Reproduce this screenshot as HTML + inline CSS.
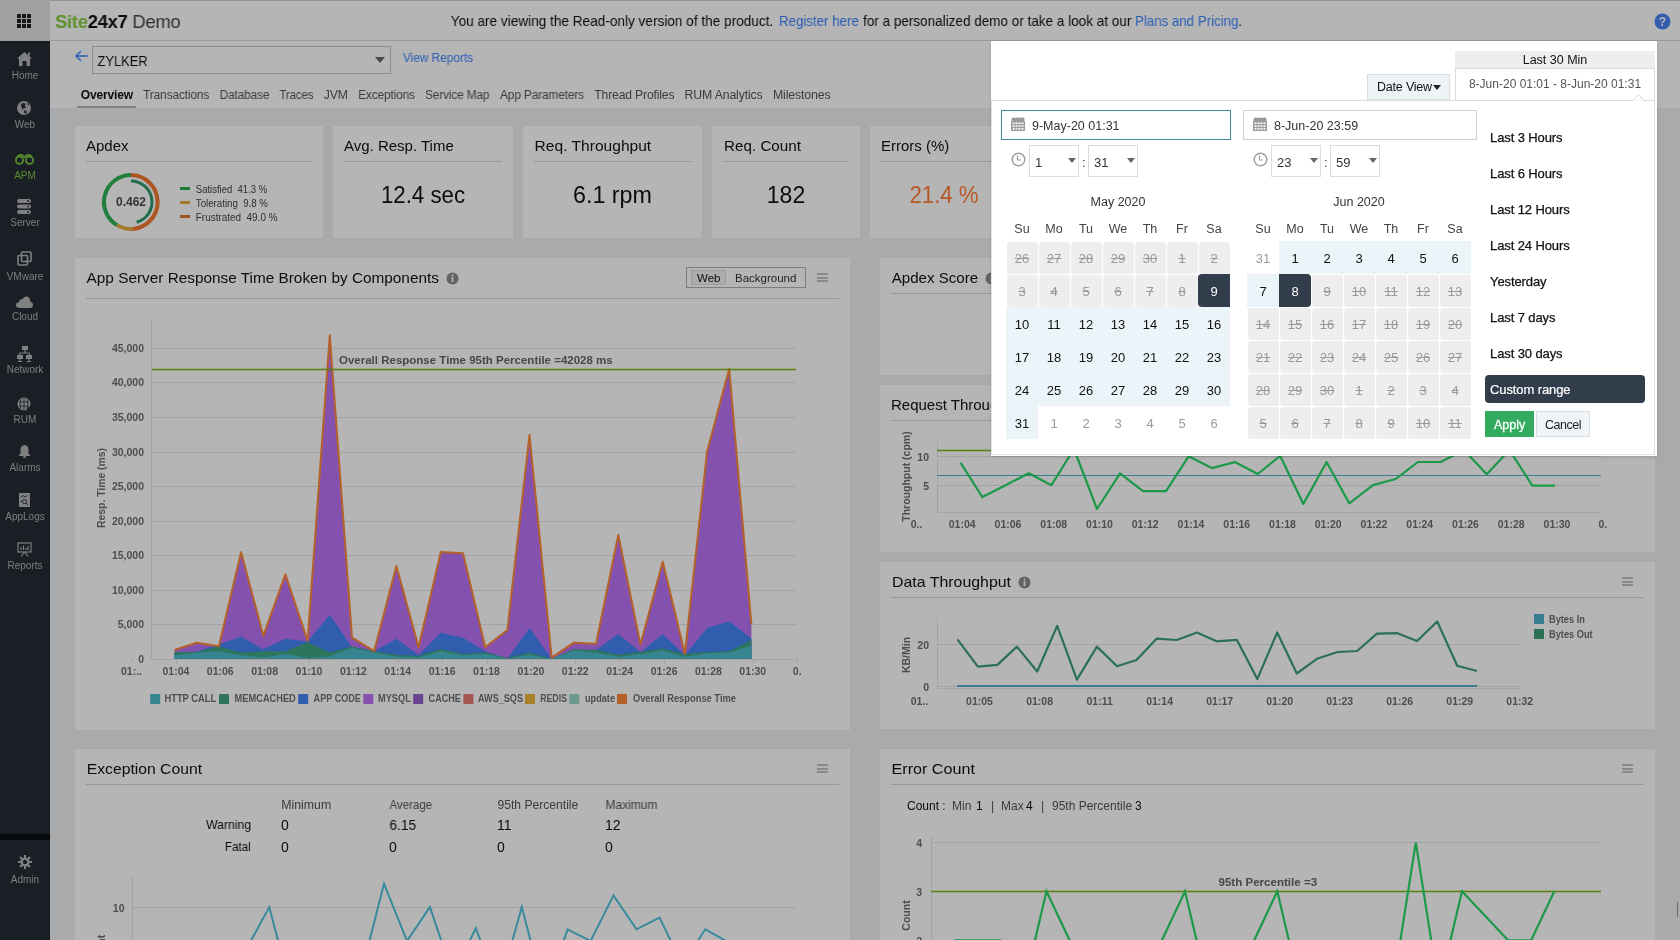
<!DOCTYPE html>
<html><head><meta charset="utf-8">
<style>
*{box-sizing:border-box;margin:0;padding:0}
html,body{width:1680px;height:940px;overflow:hidden;background:#eef0f2;font-family:"Liberation Sans",sans-serif;color:#000}
.a{position:absolute}
.nw{white-space:nowrap}
#hdr{left:0;top:0;width:1680px;height:41px;background:#fff;border-bottom:1px solid #d9d9d9}
#grid{left:0;top:0;width:50px;height:40px;background:#e2e2e2}
#side{left:0;top:41px;width:50px;height:899px;background:#252c36}
.sl{position:absolute;left:0;width:50px;text-align:center;font-size:10px;color:#b0b0b0;line-height:12px}
.si{position:absolute}
#sub{left:50px;top:41px;width:1630px;height:67px;background:#fff}
.tab{position:absolute;top:88px;font-size:12px;color:#555;white-space:nowrap;line-height:15px;letter-spacing:-0.15px}
.card{position:absolute;background:#fff}
.ct{position:absolute;left:11px;font-size:15px;color:#111;white-space:nowrap;line-height:18px;margin-top:1px}
.cdiv{position:absolute;left:11px;right:11px;height:1px;background:#d5d5d5}
.kv{position:absolute;left:0;right:0;text-align:center;font-size:23px;color:#111;line-height:28px}
.ax{font-family:"Liberation Sans",sans-serif;font-size:10.5px;font-weight:bold;fill:#6e6e6e}
.menu{position:absolute;width:11px;height:9px;border-top:2px solid #c2c2c2;border-bottom:2px solid #c2c2c2}
.menu:after{content:"";position:absolute;left:0;top:1.5px;width:11px;height:2px;background:#c2c2c2}
body>*{will-change:transform}
#ov{left:0;top:0;width:1680px;height:940px;background:rgba(0,0,0,0.29)}

</style></head><body>
<div id="hdr" class="a"></div>
<div class="a" style="left:0;top:0;width:1680px;height:1px;background:#d0d0d0"></div>
<div id="grid" class="a">
 <svg class="a" style="left:17px;top:14px" width="14" height="14" viewBox="0 0 14 14" fill="#222">
  <rect x="0" y="0" width="4" height="4"/><rect x="5" y="0" width="4" height="4"/><rect x="10" y="0" width="4" height="4"/>
  <rect x="0" y="5" width="4" height="4"/><rect x="5" y="5" width="4" height="4"/><rect x="10" y="5" width="4" height="4"/>
  <rect x="0" y="10" width="4" height="4"/><rect x="5" y="10" width="4" height="4"/><rect x="10" y="10" width="4" height="4"/>
 </svg>
</div>
<div class="a nw" style="left:55px;top:11px;font-size:19px;line-height:22px;letter-spacing:-0.3px;transform:scaleX(0.97);transform-origin:0 0"><span style="color:#86cc3c;font-weight:bold">Site</span><span style="color:#111;font-weight:bold">24x7</span> <span style="color:#444">Demo</span></div>
<div class="a nw" id="f_b1" style="left:451px;top:12px;font-size:15px;line-height:18px;color:#111;transform:translateX(-0.30px) scaleX(0.9072);transform-origin:0 0">You are viewing the Read-only version of the product.</div>
<div class="a nw" id="f_b2" style="left:779px;top:12px;font-size:15px;line-height:18px;color:#3f85ff;transform:translateX(-0.10px) scaleX(0.8884);transform-origin:0 0">Register here</div>
<div class="a nw" id="f_b3" style="left:862.5px;top:12px;font-size:15px;line-height:18px;color:#111;transform:translateX(0.00px) scaleX(0.9013);transform-origin:0 0">for a personalized demo or take a look at our</div>
<div class="a nw" id="f_b4" style="left:1135px;top:12px;font-size:15px;line-height:18px;color:#111;transform:translateX(0.00px) scaleX(0.8850);transform-origin:0 0"><span style="color:#3f85ff">Plans and Pricing</span>.</div>
<svg class="a" style="left:1654px;top:13px" width="17" height="17" viewBox="0 0 17 17"><circle cx="8.5" cy="8.5" r="8" fill="#4a84f8"/><text x="8.5" y="13" text-anchor="middle" font-size="12" font-weight="bold" fill="#fff" font-family="Liberation Sans">?</text></svg>
<div id="side" class="a"></div>
<div class="a" style="left:0;top:834px;width:50px;height:6px;background:#0e0f10"></div>
<!-- home -->
<svg class="si" style="left:17px;top:52px" width="15" height="14" viewBox="0 0 15 14"><path d="M7.5 0 L15 6.5 L13 6.5 L13 14 L9.5 14 L9.5 9 L5.5 9 L5.5 14 L2 14 L2 6.5 L0 6.5 Z" fill="#b5b5b5"/><rect x="11" y="0.5" width="2" height="3" fill="#b5b5b5"/></svg>
<div class="sl" style="top:70px">Home</div>
<!-- web -->
<svg class="si" style="left:17px;top:101px" width="15" height="15" viewBox="0 0 15 15"><circle cx="7" cy="7" r="7" fill="#b5b5b5"/><path d="M5.5 2 L8.5 2.5 L8 5 L9.5 6.5 L6 7.5 L5 9.5 L4.8 6 L3.8 4 Z" fill="#252c36"/><path d="M7 9 L9.5 10 L10 11.5 L8.5 13 L7.5 12 Z" fill="#252c36"/><path d="M10 1.5 L12 3 L11.5 4.5 L10.5 3.5 Z" fill="#252c36"/></svg>
<div class="sl" style="top:119px">Web</div>
<!-- apm -->
<svg class="si" style="left:15px;top:154px" width="19" height="11" viewBox="0 0 19 11"><circle cx="4.5" cy="6.3" r="3.6" fill="none" stroke="#7cc242" stroke-width="1.8"/><circle cx="14.5" cy="6.3" r="3.6" fill="none" stroke="#7cc242" stroke-width="1.8"/><path d="M2 3 Q4 0.5 7 1 L9.5 3 L12 1 Q15 0.5 17 3" fill="none" stroke="#7cc242" stroke-width="1.8"/></svg>
<div class="sl" style="top:170px;color:#7cc242">APM</div>
<!-- server -->
<svg class="si" style="left:17px;top:199px" width="14" height="15" viewBox="0 0 14 15"><rect x="0" y="0" width="14" height="4" rx="2" fill="#b5b5b5"/><rect x="0" y="5.5" width="14" height="4" rx="2" fill="#b5b5b5"/><rect x="0" y="11" width="14" height="4" rx="2" fill="#b5b5b5"/><circle cx="11" cy="2" r="0.9" fill="#252c36"/><circle cx="11" cy="7.5" r="0.9" fill="#252c36"/><circle cx="11" cy="13" r="0.9" fill="#252c36"/></svg>
<div class="sl" style="top:217px">Server</div>
<!-- vmware -->
<svg class="si" style="left:17px;top:251px" width="15" height="15" viewBox="0 0 15 15"><rect x="4.5" y="1" width="9.5" height="9.5" rx="1" fill="none" stroke="#b5b5b5" stroke-width="1.6"/><rect x="1" y="4.5" width="9.5" height="9.5" rx="1" fill="none" stroke="#b5b5b5" stroke-width="1.6"/></svg>
<div class="sl" style="top:271px">VMware</div>
<!-- cloud -->
<svg class="si" style="left:16px;top:296px" width="17" height="12" viewBox="0 0 17 12"><path d="M3.5 12 Q0 12 0 9 Q0 6.5 3 6.3 Q3.5 3 6.5 3 Q8 0 11 0.5 Q14.5 1.5 14 5.5 Q17 6 17 9 Q17 12 14 12 Z" fill="#b5b5b5"/></svg>
<div class="sl" style="top:311px">Cloud</div>
<!-- network -->
<svg class="si" style="left:17px;top:346px" width="15" height="16" viewBox="0 0 15 16"><rect x="5" y="0" width="6" height="4" fill="#b5b5b5"/><path d="M8 4 V7 M2.5 7 H12.5 M2.5 7 V9 M12.5 7 V9" stroke="#b5b5b5" stroke-width="1.2"/><rect x="0" y="9" width="6" height="4" fill="#b5b5b5"/><rect x="9" y="9" width="6" height="4" fill="#b5b5b5"/><path d="M3 13 V15.5 M12 13 V15.5 M1 15.5 H5 M10 15.5 H14" stroke="#b5b5b5" stroke-width="1"/></svg>
<div class="sl" style="top:364px">Network</div>
<!-- rum -->
<svg class="si" style="left:17px;top:397px" width="15" height="15" viewBox="0 0 15 15"><circle cx="7" cy="7" r="6.5" fill="#b5b5b5"/><path d="M2 5 H12 M2 9 H12 M7 1 V13 M4 2 Q2 7 4 12 M10 2 Q12 7 10 12" stroke="#252c36" stroke-width="0.8" fill="none"/><circle cx="12" cy="12" r="2" fill="#252c36"/></svg>
<div class="sl" style="top:414px">RUM</div>
<!-- alarms -->
<svg class="si" style="left:18px;top:445px" width="13" height="13" viewBox="0 0 13 13"><path d="M6.5 0 Q10.5 0.5 10.5 5 L10.5 8.5 L12.5 11 L0.5 11 L2.5 8.5 L2.5 5 Q2.5 0.5 6.5 0 Z" fill="#b5b5b5"/><circle cx="6.5" cy="12" r="1.3" fill="#b5b5b5"/></svg>
<div class="sl" style="top:462px">Alarms</div>
<!-- applogs -->
<svg class="si" style="left:19px;top:493px" width="11" height="14" viewBox="0 0 11 14"><rect x="0" y="0" width="11" height="14" fill="#b5b5b5"/><path d="M2 4 L4 2.5 L6 4 L8 2.5" stroke="#252c36" stroke-width="0.9" fill="none"/><circle cx="5.5" cy="8.5" r="2" stroke="#252c36" stroke-width="0.9" fill="none"/><path d="M7 10 L9 12 M1.5 8.5 H3" stroke="#252c36" stroke-width="0.9"/></svg>
<div class="sl" style="top:511px">AppLogs</div>
<!-- reports -->
<svg class="si" style="left:17px;top:542px" width="15" height="15" viewBox="0 0 15 15"><rect x="1" y="1" width="13" height="9" fill="none" stroke="#b5b5b5" stroke-width="1.2"/><path d="M4 8 V5 M6.5 8 V3.5 M9 8 V6 M11 8 V4" stroke="#b5b5b5" stroke-width="1.2"/><path d="M7.5 10 L4 14.5 M7.5 10 L11 14.5" stroke="#b5b5b5" stroke-width="1.2"/></svg>
<div class="sl" style="top:560px">Reports</div>
<!-- admin -->
<svg class="si" style="left:18px;top:855px" width="14" height="14" viewBox="0 0 14 14"><g fill="#b5b5b5"><circle cx="7" cy="7" r="4.6"/><rect x="6" y="0" width="2" height="14"/><rect x="0" y="6" width="14" height="2"/><rect x="6" y="0" width="2" height="14" transform="rotate(45 7 7)"/><rect x="6" y="0" width="2" height="14" transform="rotate(-45 7 7)"/></g><circle cx="7" cy="7" r="2.2" fill="#252c36"/></svg>
<div class="sl" style="top:874px">Admin</div>
<div id="sub" class="a"></div>
<svg class="a" style="left:75px;top:50px" width="14" height="12" viewBox="0 0 14 12"><path d="M6 1 L1 6 L6 11 M1 6 H13" fill="none" stroke="#3f85ff" stroke-width="1.5"/></svg>
<div class="a" style="left:92px;top:46px;width:299px;height:28px;border:1px solid #c8c8c8;background:#fff"></div>
<div class="a nw" id="f_zylker" style="left:97px;top:52px;font-size:15px;line-height:17px;color:#111;transform:translateX(0.50px) scaleX(0.8585);transform-origin:0 0">ZYLKER</div>
<svg class="a" style="left:375px;top:57px" width="10" height="6" viewBox="0 0 10 6"><path d="M0 0 H10 L5 6 Z" fill="#666"/></svg>
<div class="a nw" id="f_vr" style="left:402px;top:51px;font-size:12.5px;line-height:15px;color:#3f85ff;transform:translateX(0.90px) scaleX(0.9486);transform-origin:0 0">View Reports</div>
<div class="tab" id="f_t1" style="left:81px;color:#111;font-weight:bold;transform:translateX(-0.30px) scaleX(1.0005);transform-origin:0 0">Overview</div>
<div class="a" style="left:77px;top:106px;width:59px;height:2px;background:#b8b8b8"></div>
<div class="tab" id="f_t2" style="left:143px;transform:translateX(0.10px) scaleX(0.9947);transform-origin:0 0">Transactions</div>
<div class="tab" id="f_t3" style="left:219px;transform:translateX(0.60px) scaleX(0.9906);transform-origin:0 0">Database</div>
<div class="tab" id="f_t4" style="left:280px;transform:translateX(-0.50px) scaleX(0.9563);transform-origin:0 0">Traces</div>
<div class="tab" id="f_t5" style="left:324px;transform:translateX(-0.30px) scaleX(1.0186);transform-origin:0 0">JVM</div>
<div class="tab" id="f_t6" style="left:358px;transform:translateX(0.20px) scaleX(0.9912);transform-origin:0 0">Exceptions</div>
<div class="tab" id="f_t7" style="left:425px;transform:translateX(0.00px) scaleX(0.9885);transform-origin:0 0">Service Map</div>
<div class="tab" id="f_t8" style="left:500px;transform:translateX(0.00px) scaleX(0.9916);transform-origin:0 0">App Parameters</div>
<div class="tab" id="f_t9" style="left:594px;transform:translateX(0.30px) scaleX(1.0111);transform-origin:0 0">Thread Profiles</div>
<div class="tab" id="f_t10" style="left:685px;transform:translateX(-0.40px) scaleX(1.0239);transform-origin:0 0">RUM Analytics</div>
<div class="tab" id="f_t11" style="left:773px;transform:translateX(-0.10px) scaleX(1.0294);transform-origin:0 0">Milestones</div>
<!-- Apdex -->
<div class="card" style="left:75px;top:126px;width:248px;height:112px">
 <div class="ct" style="top:10px">Apdex</div>
 <div class="cdiv" style="top:35px"></div>
 <svg class="a" style="left:24.6px;top:45.3px" width="62" height="62" viewBox="0 0 62 62">
  <g fill="none" stroke-width="4" transform="translate(31 31)">
   <path d="M0 -27 A27 27 0 0 0 -14.0 23.1" stroke="#2fb255"/>
   <path d="M-14.0 23.1 A27 27 0 0 0 1.9 26.9" stroke="#e6ad3c"/>
   <path d="M1.9 26.9 A27 27 0 0 0 0 -27" stroke="#f27a30"/>
   <path d="M0 -21 A21 21 0 0 1 5.7 20.2" stroke="#2f9a6a" stroke-width="3"/>
  </g>
  <text x="31" y="34.7" text-anchor="middle" font-family="Liberation Sans" font-weight="bold" font-size="12" fill="#4a4a4a">0.462</text>
 </svg>
 <div class="a" style="left:105px;top:61px;width:10px;height:3px;background:#2bb24c"></div>
 <div class="a" style="left:105px;top:75px;width:10px;height:3px;background:#e0a93c"></div>
 <div class="a" style="left:105px;top:89px;width:10px;height:3px;background:#e07a2b"></div>
 <div class="a nw" id="f_leg1" style="left:121px;top:58px;font-size:10px;line-height:12px;color:#444;transform:translateX(-0.20px) scaleX(0.9514);transform-origin:0 0">Satisfied&nbsp; 41.3 %</div>
 <div class="a nw" id="f_leg2" style="left:121px;top:72px;font-size:10px;line-height:12px;color:#444;transform:translateX(-0.20px) scaleX(0.9691);transform-origin:0 0">Tolerating&nbsp; 9.8 %</div>
 <div class="a nw" id="f_leg3" style="left:121px;top:86px;font-size:10px;line-height:12px;color:#444;transform:translateX(-0.20px) scaleX(0.9931);transform-origin:0 0">Frustrated&nbsp; 49.0 %</div>
</div>
<div class="card" style="left:333px;top:126px;width:180px;height:112px">
 <div class="ct" style="top:10px">Avg. Resp. Time</div>
 <div class="cdiv" style="top:35px"></div>
 <div class="kv" id="f_kv1" style="top:55px;transform:scaleX(0.9683);transform-origin:50% 0">12.4 sec</div>
</div>
<div class="card" style="left:523px;top:126px;width:179px;height:112px">
 <div class="ct" id="f_rt" style="top:10px;transform:translateX(0.60px) scaleX(1.0382);transform-origin:0 0">Req. Throughput</div>
 <div class="cdiv" style="top:35px"></div>
 <div class="kv" id="f_kv2" style="top:55px;transform:scaleX(1.0130);transform-origin:50% 0">6.1 rpm</div>
</div>
<div class="card" style="left:712px;top:126px;width:148px;height:112px">
 <div class="ct" id="f_rc" style="top:10px;transform:translateX(1.00px) scaleX(1.0146);transform-origin:0 0">Req. Count</div>
 <div class="cdiv" style="top:35px"></div>
 <div class="kv" id="f_kv3" style="top:55px;transform:scaleX(1.0007);transform-origin:50% 0">182</div>
</div>
<div class="card" style="left:870px;top:126px;width:200px;height:112px">
 <div class="ct" style="top:10px">Errors (%)</div>
 <div class="cdiv" style="top:35px"></div>
 <div class="kv" id="f_kv4" style="top:55px;left:0;width:148px;color:#ff7d36;transform:scaleX(0.9650);transform-origin:50% 0">21.4 %</div>
</div>
<div class="card" style="left:75px;top:258px;width:775px;height:472px">
 <div class="ct nw" id="f_title1" style="top:10px;transform:translateX(0.60px) scaleX(1.0231);transform-origin:0 0">App Server Response Time Broken by Components</div>
 <svg class="a" style="left:371px;top:14px" width="13" height="13" viewBox="0 0 13 13"><circle cx="6.5" cy="6.5" r="6" fill="#8c8c8c"/><rect x="5.6" y="5.2" width="1.8" height="4.8" fill="#fff"/><circle cx="6.5" cy="3.4" r="1" fill="#fff"/></svg>
 <div class="cdiv" style="top:40px"></div>
 <div class="a" style="left:611px;top:9px;width:120px;height:21px;border:1px solid #b0b0b0"></div>
 <div class="a" style="left:616px;top:12px;width:35px;height:15px;background:#f3f3f3;border:1px solid #ddd"></div>
 <div class="a nw" style="left:622px;top:13px;font-size:11.5px;line-height:14px;color:#111">Web</div>
 <div class="a nw" style="left:660px;top:13px;font-size:11.5px;line-height:14px;color:#333">Background</div>
 <div class="menu" style="left:742px;top:15px"></div>
<svg class="a" style="left:0;top:0" width="775" height="472" viewBox="0 0 775 472">
<line x1="77.0" y1="401.5" x2="721.0" y2="401.5" stroke="#e6e6e6" stroke-width="1"/>
<text class="ax" x="69.0" y="404.8" text-anchor="end">0</text>
<line x1="77.0" y1="366.5" x2="721.0" y2="366.5" stroke="#e6e6e6" stroke-width="1"/>
<text class="ax" x="69.0" y="370.3" text-anchor="end">5,000</text>
<line x1="77.0" y1="332.5" x2="721.0" y2="332.5" stroke="#e6e6e6" stroke-width="1"/>
<text class="ax" x="69.0" y="335.7" text-anchor="end">10,000</text>
<line x1="77.0" y1="297.5" x2="721.0" y2="297.5" stroke="#e6e6e6" stroke-width="1"/>
<text class="ax" x="69.0" y="301.2" text-anchor="end">15,000</text>
<line x1="77.0" y1="263.5" x2="721.0" y2="263.5" stroke="#e6e6e6" stroke-width="1"/>
<text class="ax" x="69.0" y="266.6" text-anchor="end">20,000</text>
<line x1="77.0" y1="228.5" x2="721.0" y2="228.5" stroke="#e6e6e6" stroke-width="1"/>
<text class="ax" x="69.0" y="232.1" text-anchor="end">25,000</text>
<line x1="77.0" y1="194.5" x2="721.0" y2="194.5" stroke="#e6e6e6" stroke-width="1"/>
<text class="ax" x="69.0" y="197.5" text-anchor="end">30,000</text>
<line x1="77.0" y1="159.5" x2="721.0" y2="159.5" stroke="#e6e6e6" stroke-width="1"/>
<text class="ax" x="69.0" y="163.0" text-anchor="end">35,000</text>
<line x1="77.0" y1="124.5" x2="721.0" y2="124.5" stroke="#e6e6e6" stroke-width="1"/>
<text class="ax" x="69.0" y="128.4" text-anchor="end">40,000</text>
<line x1="77.0" y1="90.5" x2="721.0" y2="90.5" stroke="#e6e6e6" stroke-width="1"/>
<text class="ax" x="69.0" y="93.9" text-anchor="end">45,000</text>
<line x1="76.5" y1="61" x2="76.5" y2="401" stroke="#e6e6e6"/>
<text class="ax" x="56.5" y="417.0" text-anchor="middle">01:..</text>
<line x1="56.5" y1="401" x2="56.5" y2="405" stroke="#ddd"/>
<text class="ax" x="100.9" y="417.0" text-anchor="middle">01:04</text>
<line x1="101.5" y1="401" x2="101.5" y2="405" stroke="#ddd"/>
<text class="ax" x="145.3" y="417.0" text-anchor="middle">01:06</text>
<line x1="145.5" y1="401" x2="145.5" y2="405" stroke="#ddd"/>
<text class="ax" x="189.6" y="417.0" text-anchor="middle">01:08</text>
<line x1="190.5" y1="401" x2="190.5" y2="405" stroke="#ddd"/>
<text class="ax" x="234.0" y="417.0" text-anchor="middle">01:10</text>
<line x1="234.5" y1="401" x2="234.5" y2="405" stroke="#ddd"/>
<text class="ax" x="278.4" y="417.0" text-anchor="middle">01:12</text>
<line x1="278.5" y1="401" x2="278.5" y2="405" stroke="#ddd"/>
<text class="ax" x="322.8" y="417.0" text-anchor="middle">01:14</text>
<line x1="323.5" y1="401" x2="323.5" y2="405" stroke="#ddd"/>
<text class="ax" x="367.2" y="417.0" text-anchor="middle">01:16</text>
<line x1="367.5" y1="401" x2="367.5" y2="405" stroke="#ddd"/>
<text class="ax" x="411.5" y="417.0" text-anchor="middle">01:18</text>
<line x1="412.5" y1="401" x2="412.5" y2="405" stroke="#ddd"/>
<text class="ax" x="455.9" y="417.0" text-anchor="middle">01:20</text>
<line x1="456.5" y1="401" x2="456.5" y2="405" stroke="#ddd"/>
<text class="ax" x="500.3" y="417.0" text-anchor="middle">01:22</text>
<line x1="500.5" y1="401" x2="500.5" y2="405" stroke="#ddd"/>
<text class="ax" x="544.7" y="417.0" text-anchor="middle">01:24</text>
<line x1="545.5" y1="401" x2="545.5" y2="405" stroke="#ddd"/>
<text class="ax" x="589.1" y="417.0" text-anchor="middle">01:26</text>
<line x1="589.5" y1="401" x2="589.5" y2="405" stroke="#ddd"/>
<text class="ax" x="633.4" y="417.0" text-anchor="middle">01:28</text>
<line x1="633.5" y1="401" x2="633.5" y2="405" stroke="#ddd"/>
<text class="ax" x="677.8" y="417.0" text-anchor="middle">01:30</text>
<line x1="678.5" y1="401" x2="678.5" y2="405" stroke="#ddd"/>
<text class="ax" x="722.2" y="417.0" text-anchor="middle">0.</text>
<line x1="722.5" y1="401" x2="722.5" y2="405" stroke="#ddd"/>
<text class="ax" transform="translate(30.0 230.0) rotate(-90)" text-anchor="middle" textLength="80" lengthAdjust="spacingAndGlyphs">Resp. Time (ms)</text>
<path d="M99.5 392.0 L121.7 384.7 L143.9 388.2 L166.1 294.1 L188.3 377.8 L210.4 316.4 L232.6 382.8 L254.8 77.3 L277.0 379.7 L299.2 393.1 L321.4 307.9 L343.6 389.3 L365.8 294.1 L388.0 295.2 L410.2 389.3 L432.4 372.0 L454.5 177.0 L476.7 399.6 L498.9 384.7 L521.1 385.8 L543.3 276.9 L565.5 386.6 L587.7 303.7 L609.9 395.8 L632.1 193.5 L654.2 111.0 L676.4 366.3 L676.4 400.8 L99.5 400.8 Z" fill="#bb74f5"/>
<path d="M99.5 395.8 L121.7 393.2 L143.9 386.6 L166.1 378.6 L188.3 391.2 L210.4 380.8 L232.6 383.5 L254.8 356.7 L277.0 389.3 L299.2 393.2 L321.4 380.8 L343.6 396.9 L365.8 374.7 L388.0 379.7 L410.2 393.2 L432.4 400.8 L454.5 370.1 L476.7 400.8 L498.9 392.0 L521.1 392.0 L543.3 375.9 L565.5 394.3 L587.7 375.9 L609.9 396.9 L632.1 370.1 L654.2 363.2 L676.4 380.5 L676.4 400.8 L99.5 400.8 Z" fill="#4484f5"/>
<path d="M99.5 393.9 L121.7 393.9 L143.9 388.4 L166.1 394.6 L188.3 393.2 L210.4 393.2 L232.6 384.2 L254.8 394.6 L277.0 388.4 L299.2 393.2 L321.4 396.7 L343.6 398.0 L365.8 391.1 L388.0 396.0 L410.2 394.6 L432.4 400.1 L454.5 394.6 L476.7 400.8 L498.9 391.1 L521.1 391.8 L543.3 396.7 L565.5 393.9 L587.7 390.4 L609.9 396.0 L632.1 393.9 L654.2 393.2 L676.4 382.1 L676.4 400.8 L99.5 400.8 Z" fill="#41a583"/>
<path d="M99.5 397.3 L121.7 394.6 L143.9 393.2 L166.1 397.3 L188.3 399.4 L210.4 396.0 L232.6 400.1 L254.8 398.4 L277.0 389.7 L299.2 394.6 L321.4 398.4 L343.6 399.4 L365.8 393.2 L388.0 397.3 L410.2 396.0 L432.4 400.8 L454.5 396.7 L476.7 400.8 L498.9 392.5 L521.1 394.6 L543.3 398.7 L565.5 396.0 L587.7 392.5 L609.9 398.7 L632.1 395.3 L654.2 394.6 L676.4 387.7 L676.4 400.8 L99.5 400.8 Z" fill="#4dbccb"/>
<path d="M99.5 392.0 L121.7 384.7 L143.9 388.2 L166.1 294.1 L188.3 377.8 L210.4 316.4 L232.6 382.8 L254.8 77.3 L277.0 379.7 L299.2 393.1 L321.4 307.9 L343.6 389.3 L365.8 294.1 L388.0 295.2 L410.2 389.3 L432.4 372.0 L454.5 177.0 L476.7 399.6 L498.9 384.7 L521.1 385.8 L543.3 276.9 L565.5 386.6 L587.7 303.7 L609.9 395.8 L632.1 193.5 L654.2 111.0 L676.4 366.3" fill="none" stroke="#ff8a3c" stroke-width="2" stroke-linejoin="round"/>
<line x1="77.0" y1="111.5" x2="721.0" y2="111.5" stroke="#7eb812" stroke-width="1.5"/>
<text class="ax" x="264.0" y="106.0" style="fill:#666;font-size:11.5px">Overall Response Time 95th Percentile =42028 ms</text>
<rect x="75.2" y="436" width="10" height="10" fill="#4dbccb"/>
<text class="ax" x="89.4" y="444" textLength="51.9" lengthAdjust="spacingAndGlyphs" style="font-size:10px">HTTP CALL</text>
<rect x="144.0" y="436" width="10" height="10" fill="#41a583"/>
<text class="ax" x="159.6" y="444" textLength="61.2" lengthAdjust="spacingAndGlyphs" style="font-size:10px">MEMCACHED</text>
<rect x="223.2" y="436" width="10" height="10" fill="#4484f5"/>
<text class="ax" x="238.6" y="444" textLength="47.3" lengthAdjust="spacingAndGlyphs" style="font-size:10px">APP CODE</text>
<rect x="288.3" y="436" width="10" height="10" fill="#bb74f5"/>
<text class="ax" x="303.0" y="444" textLength="32.8" lengthAdjust="spacingAndGlyphs" style="font-size:10px">MYSQL</text>
<rect x="338.2" y="436" width="10" height="10" fill="#9460cf"/>
<text class="ax" x="353.6" y="444" textLength="32.3" lengthAdjust="spacingAndGlyphs" style="font-size:10px">CACHE</text>
<rect x="388.4" y="436" width="10" height="10" fill="#e67a74"/>
<text class="ax" x="403.0" y="444" textLength="45.0" lengthAdjust="spacingAndGlyphs" style="font-size:10px">AWS_SQS</text>
<rect x="450.0" y="436" width="10" height="10" fill="#f0b43a"/>
<text class="ax" x="465.2" y="444" textLength="26.8" lengthAdjust="spacingAndGlyphs" style="font-size:10px">REDIS</text>
<rect x="494.3" y="436" width="10" height="10" fill="#9cd8c8"/>
<text class="ax" x="510.0" y="444" textLength="30.0" lengthAdjust="spacingAndGlyphs" style="font-size:10px">update</text>
<rect x="542.0" y="436" width="10" height="10" fill="#ff8a3c"/>
<text class="ax" x="557.9" y="444" textLength="103.1" lengthAdjust="spacingAndGlyphs" style="font-size:10px">Overall Response Time</text>
</svg></div>
<div class="card" style="left:880px;top:258px;width:775px;height:117px">
 <div class="ct nw" id="f_title_as" style="top:10px;transform:translateX(0.70px) scaleX(1.0071);transform-origin:0 0">Apdex Score</div>
 <div class="cdiv" style="top:35px"></div>
 <div class="menu" style="left:742px;top:15px"></div>
</div>
<svg class="a" style="left:985px;top:272px" width="13" height="13" viewBox="0 0 13 13"><circle cx="6.5" cy="6.5" r="6" fill="#8c8c8c"/><rect x="5.6" y="5.2" width="1.8" height="4.8" fill="#fff"/><circle cx="6.5" cy="3.4" r="1" fill="#fff"/></svg>
<div class="card" style="left:880px;top:385px;width:775px;height:167px">
 <div class="ct nw" style="top:10px">Request Throughput</div>
 <div class="cdiv" style="top:35px"></div>
 <div class="menu" style="left:742px;top:15px"></div>
</div>
<div class="card" style="left:880px;top:562px;width:775px;height:167px">
 <div class="ct nw" id="f_title_dt" style="top:10px;transform:translateX(1.00px) scaleX(1.0595);transform-origin:0 0">Data Throughput</div>
 <div class="cdiv" style="top:35px"></div>
 <div class="menu" style="left:742px;top:15px"></div>
</div>
<svg class="a" style="left:1018px;top:576px" width="13" height="13" viewBox="0 0 13 13"><circle cx="6.5" cy="6.5" r="6" fill="#8c8c8c"/><rect x="5.6" y="5.2" width="1.8" height="4.8" fill="#fff"/><circle cx="6.5" cy="3.4" r="1" fill="#fff"/></svg>
<svg class="a" style="left:0;top:0" width="1680" height="940" viewBox="0 0 1680 940">
<line x1="937.5" y1="441" x2="937.5" y2="512" stroke="#e6e6e6"/>
<line x1="937" y1="512.5" x2="1601" y2="512.5" stroke="#e6e6e6"/>
<line x1="937" y1="456.5" x2="1601" y2="456.5" stroke="#e6e6e6"/>
<text class="ax" x="929" y="460.5" text-anchor="end">10</text>
<line x1="937" y1="485.5" x2="1601" y2="485.5" stroke="#e6e6e6"/>
<text class="ax" x="929" y="489.5" text-anchor="end">5</text>
<text class="ax" transform="translate(910 476.5) rotate(-90)" text-anchor="middle">Throughput (cpm)</text>
<text class="ax" x="916.5" y="527.5" text-anchor="middle">0..</text>
<text class="ax" x="962.2" y="527.5" text-anchor="middle">01:04</text>
<text class="ax" x="1008.0" y="527.5" text-anchor="middle">01:06</text>
<text class="ax" x="1053.8" y="527.5" text-anchor="middle">01:08</text>
<text class="ax" x="1099.5" y="527.5" text-anchor="middle">01:10</text>
<text class="ax" x="1145.2" y="527.5" text-anchor="middle">01:12</text>
<text class="ax" x="1191.0" y="527.5" text-anchor="middle">01:14</text>
<text class="ax" x="1236.8" y="527.5" text-anchor="middle">01:16</text>
<text class="ax" x="1282.5" y="527.5" text-anchor="middle">01:18</text>
<text class="ax" x="1328.2" y="527.5" text-anchor="middle">01:20</text>
<text class="ax" x="1374.0" y="527.5" text-anchor="middle">01:22</text>
<text class="ax" x="1419.8" y="527.5" text-anchor="middle">01:24</text>
<text class="ax" x="1465.5" y="527.5" text-anchor="middle">01:26</text>
<text class="ax" x="1511.2" y="527.5" text-anchor="middle">01:28</text>
<text class="ax" x="1557.0" y="527.5" text-anchor="middle">01:30</text>
<text class="ax" x="1602.8" y="527.5" text-anchor="middle">0.</text>
<line x1="937" y1="450.5" x2="1601" y2="450.5" stroke="#7eb812" stroke-width="1.5"/>
<line x1="937" y1="475.5" x2="1601" y2="475.5" stroke="#4fb0cc" stroke-width="1.2"/>
<path d="M960.5 462.6 L982.4 497.1 L1005.5 485.2 L1028.8 473.3 L1051.4 485.2 L1074.0 449.0 L1097.0 509.0 L1120.0 473.3 L1143.0 491.2 L1166.0 491.2 L1188.8 456.2 L1211.7 468.1 L1234.8 462.1 L1257.8 474.0 L1280.2 455.9 L1303.4 503.9 L1326.6 462.0 L1349.3 503.4 L1373.0 485.1 L1395.7 479.0 L1418.0 462.0 L1440.8 462.0 L1464.0 450.0 L1486.7 474.2 L1509.5 450.0 L1532.3 485.6 L1555.0 485.6" fill="none" stroke="#2ad868" stroke-width="2.2" stroke-linejoin="round"/>
<line x1="937.5" y1="618" x2="937.5" y2="688" stroke="#e6e6e6"/>
<line x1="937" y1="688.5" x2="1520" y2="688.5" stroke="#e6e6e6"/>
<line x1="937" y1="644.5" x2="1520" y2="644.5" stroke="#e6e6e6"/>
<text class="ax" x="929" y="648.5" text-anchor="end">20</text>
<line x1="937" y1="686.5" x2="1520" y2="686.5" stroke="#e6e6e6"/>
<text class="ax" x="929" y="690.5" text-anchor="end">0</text>
<text class="ax" transform="translate(910 655) rotate(-90)" text-anchor="middle">KB/Min</text>
<text class="ax" x="919.5" y="705" text-anchor="middle">01..</text>
<text class="ax" x="979.5" y="705" text-anchor="middle">01:05</text>
<text class="ax" x="1039.6" y="705" text-anchor="middle">01:08</text>
<text class="ax" x="1099.6" y="705" text-anchor="middle">01:11</text>
<text class="ax" x="1159.6" y="705" text-anchor="middle">01:14</text>
<text class="ax" x="1219.7" y="705" text-anchor="middle">01:17</text>
<text class="ax" x="1279.7" y="705" text-anchor="middle">01:20</text>
<text class="ax" x="1339.7" y="705" text-anchor="middle">01:23</text>
<text class="ax" x="1399.7" y="705" text-anchor="middle">01:26</text>
<text class="ax" x="1459.8" y="705" text-anchor="middle">01:29</text>
<text class="ax" x="1519.8" y="705" text-anchor="middle">01:32</text>
<line x1="957" y1="686" x2="1477" y2="686" stroke="#4fb0cc" stroke-width="2.2"/>
<path d="M957.4 639.3 L977.9 666.6 L997.4 664.9 L1016.9 646.6 L1037.2 671.5 L1057.2 625.9 L1076.9 679.6 L1096.9 646.6 L1117.0 666.2 L1136.5 660.0 L1156.7 638.6 L1176.7 640.0 L1197.0 632.5 L1216.5 641.3 L1236.8 639.8 L1257.3 679.1 L1277.2 632.5 L1296.8 673.5 L1316.9 658.8 L1337.6 652.0 L1357.1 651.0 L1376.9 633.7 L1397.4 633.2 L1417.1 641.0 L1437.2 621.5 L1457.2 665.7 L1476.9 671.0" fill="none" stroke="#3fa07a" stroke-width="2.2" stroke-linejoin="round"/>
<rect x="1534" y="614" width="10" height="10" fill="#4fb0cc"/><text class="ax" x="1549" y="623" textLength="35.9" lengthAdjust="spacingAndGlyphs" style="font-size:10.5px">Bytes In</text>
<rect x="1534" y="629" width="10" height="10" fill="#3fa07a"/><text class="ax" x="1549" y="638" textLength="43.7" lengthAdjust="spacingAndGlyphs" style="font-size:10.5px">Bytes Out</text>
</svg>
<div class="card" style="left:75px;top:749px;width:775px;height:200px">
 <div class="ct nw" id="f_title_ec" style="top:10px;transform:translateX(0.75px) scaleX(1.0470);transform-origin:0 0">Exception Count</div>
 <div class="cdiv" style="top:35px"></div>
 <div class="menu" style="left:742px;top:15px"></div>
</div>
<div class="card" style="left:880px;top:749px;width:775px;height:200px">
 <div class="ct nw" id="f_title_er" style="top:10px;transform:translateX(0.50px) scaleX(1.0757);transform-origin:0 0">Error Count</div>
 <div class="cdiv" style="top:35px"></div>
 <div class="menu" style="left:742px;top:15px"></div>
</div>
<div class="a nw" id="f_min" style="left:281px;top:797px;font-size:12px;line-height:16px;color:#555;transform:translateX(0.25px) scaleX(1.0273);transform-origin:0 0">Minimum</div>
<div class="a nw" id="f_avg" style="left:389px;top:797px;font-size:12px;line-height:16px;color:#555;transform:translateX(0.50px) scaleX(0.9554);transform-origin:0 0">Average</div>
<div class="a nw" id="f_p95" style="left:497px;top:797px;font-size:12px;line-height:16px;color:#555;transform:translateX(0.50px) scaleX(1.0086);transform-origin:0 0">95th Percentile</div>
<div class="a nw" id="f_max" style="left:605px;top:797px;font-size:12px;line-height:16px;color:#555;transform:translateX(0.50px) scaleX(0.9997);transform-origin:0 0">Maximum</div>
<div class="a nw" id="f_warn" style="right:1429px;top:817px;font-size:12.5px;line-height:16px;color:#111;transform:scaleX(0.9763);transform-origin:100% 0">Warning</div>
<div class="a nw" id="f_fatal" style="right:1429px;top:839px;font-size:12.5px;line-height:16px;color:#111;transform:scaleX(0.9354);transform-origin:100% 0">Fatal</div>
<div class="a nw" style="left:281px;top:817px;font-size:14px;line-height:16px;color:#111">0</div>
<div class="a nw" id="f_615" style="left:389px;top:817px;font-size:14px;line-height:16px;color:#111;transform:translateX(0.50px) scaleX(0.9725);transform-origin:0 0">6.15</div>
<div class="a nw" style="left:497px;top:817px;font-size:14px;line-height:16px;color:#111">11</div>
<div class="a nw" style="left:605px;top:817px;font-size:14px;line-height:16px;color:#111">12</div>
<div class="a nw" style="left:281px;top:839px;font-size:14px;line-height:16px;color:#111">0</div>
<div class="a nw" style="left:389px;top:839px;font-size:14px;line-height:16px;color:#111">0</div>
<div class="a nw" style="left:497px;top:839px;font-size:14px;line-height:16px;color:#111">0</div>
<div class="a nw" style="left:605px;top:839px;font-size:14px;line-height:16px;color:#111">0</div>
<div class="a nw" style="left:906.6px;top:798px;font-size:12px;line-height:16px;color:#111">Count :</div>
<div class="a nw" style="left:952.2px;top:798px;font-size:12px;line-height:16px;color:#555">Min</div>
<div class="a nw" style="left:976.0px;top:798px;font-size:12px;line-height:16px;color:#111">1</div>
<div class="a nw" style="left:990.5px;top:798px;font-size:12px;line-height:16px;color:#555">|</div>
<div class="a nw" style="left:1000.5px;top:798px;font-size:12px;line-height:16px;color:#555">Max</div>
<div class="a nw" style="left:1026.2px;top:798px;font-size:12px;line-height:16px;color:#111">4</div>
<div class="a nw" style="left:1041.2px;top:798px;font-size:12px;line-height:16px;color:#555">|</div>
<div class="a nw" style="left:1051.8px;top:798px;font-size:12px;line-height:16px;color:#555">95th Percentile</div>
<div class="a nw" style="left:1135.3px;top:798px;font-size:12px;line-height:16px;color:#111">3</div>
<svg class="a" style="left:0;top:0" width="1680" height="940" viewBox="0 0 1680 940">
<line x1="132.5" y1="877" x2="132.5" y2="940" stroke="#e6e6e6"/>
<line x1="132" y1="907.5" x2="796" y2="907.5" stroke="#e6e6e6"/>
<text class="ax" x="124.5" y="911.5" text-anchor="end">10</text>
<text class="ax" transform="translate(105 950) rotate(-90)" text-anchor="middle">Count</text>
<path d="M200.4 989.0 L223.4 989.0 L246.3 949.2 L269.3 907.1 L292.2 994.9 L315.2 989.0 L338.1 989.0 L361.1 973.8 L384.0 883.7 L407.0 941.0 L429.9 907.1 L452.9 975.0 L475.8 928.2 L498.8 989.0 L521.8 907.1 L544.7 994.9 L567.6 929.3 L590.6 941.0 L613.5 895.4 L636.5 929.3 L659.5 917.6 L682.4 964.4 L705.3 929.3 L728.3 942.2 L751.2 989.0 L774.2 989.0" fill="none" stroke="#4fc3dc" stroke-width="2" stroke-linejoin="miter"/>
<line x1="931.5" y1="835" x2="931.5" y2="940" stroke="#e6e6e6"/>
<line x1="931" y1="842.5" x2="1601" y2="842.5" stroke="#e6e6e6"/>
<text class="ax" x="922" y="846.5" text-anchor="end">4</text>
<text class="ax" x="922" y="895.5" text-anchor="end">3</text>
<text class="ax" x="922" y="944.5" text-anchor="end">2</text>
<text class="ax" transform="translate(910 915.5) rotate(-90)" text-anchor="middle">Count</text>
<line x1="931" y1="891.5" x2="1601" y2="891.5" stroke="#7eb812" stroke-width="1.5"/>
<text class="ax" x="1218.5" y="886" textLength="98.6" lengthAdjust="spacingAndGlyphs" style="font-size:11.5px;fill:#666">95th Percentile =3</text>
<path d="M954.2 940.3 L977.3 940.3 L1000.4 940.3 L1023.4 989.3 L1046.5 891.3 L1069.6 940.3 L1092.7 989.3 L1115.8 989.3 L1138.8 989.3 L1161.9 940.3 L1185.0 891.3 L1208.1 989.3 L1231.2 989.3 L1254.2 940.3 L1277.3 891.3 L1300.4 989.3 L1323.5 989.3 L1346.6 989.3 L1369.6 989.3 L1392.7 989.3 L1415.8 842.3 L1438.9 989.3 L1462.0 891.3 L1485.0 915.8 L1508.1 940.3 L1531.2 940.3 L1554.3 891.3" fill="none" stroke="#2ad868" stroke-width="2.2" stroke-linejoin="miter"/>
</svg>
<!-- feedback tab --><div class="a" style="left:1677px;top:902px;width:3px;height:15px;background:#f0f0f0;border-left:1px solid #999"></div>
<div id="ov" class="a"></div>
<div class="a" style="left:991px;top:41px;width:666px;height:415px;background:#fff;box-shadow:0 1px 3px rgba(0,0,0,0.15)"></div>
<div class="a" style="left:991px;top:100px;width:664px;height:355px;border:1px solid #e2e2e2;border-top:none"></div>
<div class="a" style="left:991px;top:100px;width:464px;height:1px;background:#dedede"></div>
<div class="a" style="left:1455px;top:51px;width:200px;height:18px;background:#eee"></div>
<div class="a nw pp" style="left:1455px;top:51px;width:200px;text-align:center;font-size:12.5px;line-height:18px;color:#111">Last 30 Min</div>
<div class="a" style="left:1455px;top:68px;width:200px;height:33px;border:1px solid #dcdcdc;background:#fff"></div>
<div class="a nw pp" style="left:1455px;top:76px;width:200px;text-align:center;font-size:12px;line-height:16px;color:#555">8-Jun-20 01:01 - 8-Jun-20 01:31</div>
<svg class="a" style="left:1631px;top:93px" width="15" height="9" viewBox="0 0 15 9"><path d="M0 7.5 H2 L7.5 1.5 L13 7.5 H15" fill="#fff" stroke="#d6d6d6" stroke-width="1"/><rect x="2.5" y="7.6" width="10" height="1.4" fill="#fff"/></svg>
<div class="a" style="left:1367px;top:74px;width:83px;height:26px;background:#eef3f6;border:1px solid #d7dfe4"></div>
<div class="a nw pp" style="left:1377px;top:79px;font-size:12.5px;line-height:16px;color:#111;letter-spacing:-0.2px">Date View</div>
<svg class="a" style="left:1433px;top:85px" width="8" height="5" viewBox="0 0 8 5"><path d="M0 0 H8 L4 5 Z" fill="#222"/></svg>
<div class="a" style="left:1001px;top:110px;width:230px;height:30px;border:1.5px solid #3e8e9f;background:#fff"></div>
<svg class="a" style="left:1011px;top:117px" width="14" height="14" viewBox="0 0 14 14"><path d="M1 1.5 H13 V3.5 H1 Z M3 0 V2 M6 0 V2 M9 0 V2 M12 0 V2" stroke="#9a9a9a" stroke-width="1" fill="#9a9a9a"/><rect x="0" y="4" width="14" height="10" fill="#9a9a9a"/><g fill="#fff"><rect x="1.5" y="5.5" width="2" height="1.6"/><rect x="4.5" y="5.5" width="2" height="1.6"/><rect x="7.5" y="5.5" width="2" height="1.6"/><rect x="10.5" y="5.5" width="2" height="1.6"/><rect x="1.5" y="8.3" width="2" height="1.6"/><rect x="4.5" y="8.3" width="2" height="1.6"/><rect x="7.5" y="8.3" width="2" height="1.6"/><rect x="10.5" y="8.3" width="2" height="1.6"/><rect x="1.5" y="11.1" width="2" height="1.6"/><rect x="4.5" y="11.1" width="2" height="1.6"/><rect x="7.5" y="11.1" width="2" height="1.6"/><rect x="10.5" y="11.1" width="2" height="1.6"/></g></svg>
<div class="a nw pp" style="left:1032px;top:118px;font-size:12.5px;line-height:16px;color:#333">9-May-20 01:31</div>
<div class="a" style="left:1243px;top:110px;width:234px;height:30px;border:1px solid #d0d0d0;background:#fff"></div>
<svg class="a" style="left:1253px;top:117px" width="14" height="14" viewBox="0 0 14 14"><path d="M1 1.5 H13 V3.5 H1 Z M3 0 V2 M6 0 V2 M9 0 V2 M12 0 V2" stroke="#9a9a9a" stroke-width="1" fill="#9a9a9a"/><rect x="0" y="4" width="14" height="10" fill="#9a9a9a"/><g fill="#fff"><rect x="1.5" y="5.5" width="2" height="1.6"/><rect x="4.5" y="5.5" width="2" height="1.6"/><rect x="7.5" y="5.5" width="2" height="1.6"/><rect x="10.5" y="5.5" width="2" height="1.6"/><rect x="1.5" y="8.3" width="2" height="1.6"/><rect x="4.5" y="8.3" width="2" height="1.6"/><rect x="7.5" y="8.3" width="2" height="1.6"/><rect x="10.5" y="8.3" width="2" height="1.6"/><rect x="1.5" y="11.1" width="2" height="1.6"/><rect x="4.5" y="11.1" width="2" height="1.6"/><rect x="7.5" y="11.1" width="2" height="1.6"/><rect x="10.5" y="11.1" width="2" height="1.6"/></g></svg>
<div class="a nw pp" style="left:1274px;top:118px;font-size:12.5px;line-height:16px;color:#333">8-Jun-20 23:59</div>
<svg class="a" style="left:1011px;top:152px" width="15" height="15" viewBox="0 0 15 15"><circle cx="7.5" cy="7.5" r="6.3" fill="none" stroke="#a0a0a0" stroke-width="1.5"/><path d="M6.5 3.5 V8 H10" fill="none" stroke="#a0a0a0" stroke-width="1.2"/></svg>
<div class="a" style="left:1029px;top:145px;width:50px;height:32px;border:1px solid #dcdcdc;background:#fff"></div>
<div class="a nw pp" style="left:1035px;top:155px;font-size:13px;line-height:16px;color:#333">1</div>
<svg class="a" style="left:1068px;top:158px" width="8" height="5" viewBox="0 0 8 5"><path d="M0 0 H8 L4 5 Z" fill="#666"/></svg>
<div class="a" style="left:1088px;top:145px;width:50px;height:32px;border:1px solid #dcdcdc;background:#fff"></div>
<div class="a nw pp" style="left:1094px;top:155px;font-size:13px;line-height:16px;color:#333">31</div>
<svg class="a" style="left:1127px;top:158px" width="8" height="5" viewBox="0 0 8 5"><path d="M0 0 H8 L4 5 Z" fill="#666"/></svg>
<div class="a nw pp" style="left:1082px;top:155px;font-size:13px;line-height:16px;color:#333">:</div>
<svg class="a" style="left:1253px;top:152px" width="15" height="15" viewBox="0 0 15 15"><circle cx="7.5" cy="7.5" r="6.3" fill="none" stroke="#a0a0a0" stroke-width="1.5"/><path d="M6.5 3.5 V8 H10" fill="none" stroke="#a0a0a0" stroke-width="1.2"/></svg>
<div class="a" style="left:1271px;top:145px;width:50px;height:32px;border:1px solid #dcdcdc;background:#fff"></div>
<div class="a nw pp" style="left:1277px;top:155px;font-size:13px;line-height:16px;color:#333">23</div>
<svg class="a" style="left:1310px;top:158px" width="8" height="5" viewBox="0 0 8 5"><path d="M0 0 H8 L4 5 Z" fill="#666"/></svg>
<div class="a" style="left:1330px;top:145px;width:50px;height:32px;border:1px solid #dcdcdc;background:#fff"></div>
<div class="a nw pp" style="left:1336px;top:155px;font-size:13px;line-height:16px;color:#333">59</div>
<svg class="a" style="left:1369px;top:158px" width="8" height="5" viewBox="0 0 8 5"><path d="M0 0 H8 L4 5 Z" fill="#666"/></svg>
<div class="a nw pp" style="left:1324px;top:155px;font-size:13px;line-height:16px;color:#333">:</div>
<div class="a nw pp" style="left:1006px;top:194px;width:224px;text-align:center;font-size:12.5px;line-height:16px;color:#333">May 2020</div>
<div class="a nw pp" style="left:1006px;top:221px;width:32px;text-align:center;font-size:12.5px;line-height:16px;color:#444">Su</div>
<div class="a nw pp" style="left:1038px;top:221px;width:32px;text-align:center;font-size:12.5px;line-height:16px;color:#444">Mo</div>
<div class="a nw pp" style="left:1070px;top:221px;width:32px;text-align:center;font-size:12.5px;line-height:16px;color:#444">Tu</div>
<div class="a nw pp" style="left:1102px;top:221px;width:32px;text-align:center;font-size:12.5px;line-height:16px;color:#444">We</div>
<div class="a nw pp" style="left:1134px;top:221px;width:32px;text-align:center;font-size:12.5px;line-height:16px;color:#444">Th</div>
<div class="a nw pp" style="left:1166px;top:221px;width:32px;text-align:center;font-size:12.5px;line-height:16px;color:#444">Fr</div>
<div class="a nw pp" style="left:1198px;top:221px;width:32px;text-align:center;font-size:12.5px;line-height:16px;color:#444">Sa</div>
<div class="a" style="left:1007px;top:242px;width:31px;height:32px;background:#eee;border-radius:3px"></div>
<div class="a nw pp" style="left:1006px;top:251px;width:32px;text-align:center;font-size:13px;line-height:16px;color:#999;text-decoration:line-through">26</div>
<div class="a" style="left:1039px;top:242px;width:31px;height:32px;background:#eee;border-radius:3px"></div>
<div class="a nw pp" style="left:1038px;top:251px;width:32px;text-align:center;font-size:13px;line-height:16px;color:#999;text-decoration:line-through">27</div>
<div class="a" style="left:1071px;top:242px;width:31px;height:32px;background:#eee;border-radius:3px"></div>
<div class="a nw pp" style="left:1070px;top:251px;width:32px;text-align:center;font-size:13px;line-height:16px;color:#999;text-decoration:line-through">28</div>
<div class="a" style="left:1103px;top:242px;width:31px;height:32px;background:#eee;border-radius:3px"></div>
<div class="a nw pp" style="left:1102px;top:251px;width:32px;text-align:center;font-size:13px;line-height:16px;color:#999;text-decoration:line-through">29</div>
<div class="a" style="left:1135px;top:242px;width:31px;height:32px;background:#eee;border-radius:3px"></div>
<div class="a nw pp" style="left:1134px;top:251px;width:32px;text-align:center;font-size:13px;line-height:16px;color:#999;text-decoration:line-through">30</div>
<div class="a" style="left:1167px;top:242px;width:31px;height:32px;background:#eee;border-radius:3px"></div>
<div class="a nw pp" style="left:1166px;top:251px;width:32px;text-align:center;font-size:13px;line-height:16px;color:#999;text-decoration:line-through">1</div>
<div class="a" style="left:1199px;top:242px;width:31px;height:32px;background:#eee;border-radius:3px"></div>
<div class="a nw pp" style="left:1198px;top:251px;width:32px;text-align:center;font-size:13px;line-height:16px;color:#999;text-decoration:line-through">2</div>
<div class="a" style="left:1007px;top:275px;width:31px;height:32px;background:#eee;border-radius:3px"></div>
<div class="a nw pp" style="left:1006px;top:284px;width:32px;text-align:center;font-size:13px;line-height:16px;color:#999;text-decoration:line-through">3</div>
<div class="a" style="left:1039px;top:275px;width:31px;height:32px;background:#eee;border-radius:3px"></div>
<div class="a nw pp" style="left:1038px;top:284px;width:32px;text-align:center;font-size:13px;line-height:16px;color:#999;text-decoration:line-through">4</div>
<div class="a" style="left:1071px;top:275px;width:31px;height:32px;background:#eee;border-radius:3px"></div>
<div class="a nw pp" style="left:1070px;top:284px;width:32px;text-align:center;font-size:13px;line-height:16px;color:#999;text-decoration:line-through">5</div>
<div class="a" style="left:1103px;top:275px;width:31px;height:32px;background:#eee;border-radius:3px"></div>
<div class="a nw pp" style="left:1102px;top:284px;width:32px;text-align:center;font-size:13px;line-height:16px;color:#999;text-decoration:line-through">6</div>
<div class="a" style="left:1135px;top:275px;width:31px;height:32px;background:#eee;border-radius:3px"></div>
<div class="a nw pp" style="left:1134px;top:284px;width:32px;text-align:center;font-size:13px;line-height:16px;color:#999;text-decoration:line-through">7</div>
<div class="a" style="left:1167px;top:275px;width:31px;height:32px;background:#eee;border-radius:3px"></div>
<div class="a nw pp" style="left:1166px;top:284px;width:32px;text-align:center;font-size:13px;line-height:16px;color:#999;text-decoration:line-through">8</div>
<div class="a" style="left:1198px;top:274px;width:32px;height:33px;background:#323d4b;border-radius:4px 0 0 4px"></div>
<div class="a nw pp" style="left:1198px;top:284px;width:32px;text-align:center;font-size:13px;line-height:16px;color:#fff">9</div>
<div class="a" style="left:1006px;top:307px;width:32px;height:33px;background:#ebf4f8"></div>
<div class="a nw pp" style="left:1006px;top:317px;width:32px;text-align:center;font-size:13px;line-height:16px;color:#111">10</div>
<div class="a" style="left:1038px;top:307px;width:32px;height:33px;background:#ebf4f8"></div>
<div class="a nw pp" style="left:1038px;top:317px;width:32px;text-align:center;font-size:13px;line-height:16px;color:#111">11</div>
<div class="a" style="left:1070px;top:307px;width:32px;height:33px;background:#ebf4f8"></div>
<div class="a nw pp" style="left:1070px;top:317px;width:32px;text-align:center;font-size:13px;line-height:16px;color:#111">12</div>
<div class="a" style="left:1102px;top:307px;width:32px;height:33px;background:#ebf4f8"></div>
<div class="a nw pp" style="left:1102px;top:317px;width:32px;text-align:center;font-size:13px;line-height:16px;color:#111">13</div>
<div class="a" style="left:1134px;top:307px;width:32px;height:33px;background:#ebf4f8"></div>
<div class="a nw pp" style="left:1134px;top:317px;width:32px;text-align:center;font-size:13px;line-height:16px;color:#111">14</div>
<div class="a" style="left:1166px;top:307px;width:32px;height:33px;background:#ebf4f8"></div>
<div class="a nw pp" style="left:1166px;top:317px;width:32px;text-align:center;font-size:13px;line-height:16px;color:#111">15</div>
<div class="a" style="left:1198px;top:307px;width:32px;height:33px;background:#ebf4f8"></div>
<div class="a nw pp" style="left:1198px;top:317px;width:32px;text-align:center;font-size:13px;line-height:16px;color:#111">16</div>
<div class="a" style="left:1006px;top:340px;width:32px;height:33px;background:#ebf4f8"></div>
<div class="a nw pp" style="left:1006px;top:350px;width:32px;text-align:center;font-size:13px;line-height:16px;color:#111">17</div>
<div class="a" style="left:1038px;top:340px;width:32px;height:33px;background:#ebf4f8"></div>
<div class="a nw pp" style="left:1038px;top:350px;width:32px;text-align:center;font-size:13px;line-height:16px;color:#111">18</div>
<div class="a" style="left:1070px;top:340px;width:32px;height:33px;background:#ebf4f8"></div>
<div class="a nw pp" style="left:1070px;top:350px;width:32px;text-align:center;font-size:13px;line-height:16px;color:#111">19</div>
<div class="a" style="left:1102px;top:340px;width:32px;height:33px;background:#ebf4f8"></div>
<div class="a nw pp" style="left:1102px;top:350px;width:32px;text-align:center;font-size:13px;line-height:16px;color:#111">20</div>
<div class="a" style="left:1134px;top:340px;width:32px;height:33px;background:#ebf4f8"></div>
<div class="a nw pp" style="left:1134px;top:350px;width:32px;text-align:center;font-size:13px;line-height:16px;color:#111">21</div>
<div class="a" style="left:1166px;top:340px;width:32px;height:33px;background:#ebf4f8"></div>
<div class="a nw pp" style="left:1166px;top:350px;width:32px;text-align:center;font-size:13px;line-height:16px;color:#111">22</div>
<div class="a" style="left:1198px;top:340px;width:32px;height:33px;background:#ebf4f8"></div>
<div class="a nw pp" style="left:1198px;top:350px;width:32px;text-align:center;font-size:13px;line-height:16px;color:#111">23</div>
<div class="a" style="left:1006px;top:373px;width:32px;height:33px;background:#ebf4f8"></div>
<div class="a nw pp" style="left:1006px;top:383px;width:32px;text-align:center;font-size:13px;line-height:16px;color:#111">24</div>
<div class="a" style="left:1038px;top:373px;width:32px;height:33px;background:#ebf4f8"></div>
<div class="a nw pp" style="left:1038px;top:383px;width:32px;text-align:center;font-size:13px;line-height:16px;color:#111">25</div>
<div class="a" style="left:1070px;top:373px;width:32px;height:33px;background:#ebf4f8"></div>
<div class="a nw pp" style="left:1070px;top:383px;width:32px;text-align:center;font-size:13px;line-height:16px;color:#111">26</div>
<div class="a" style="left:1102px;top:373px;width:32px;height:33px;background:#ebf4f8"></div>
<div class="a nw pp" style="left:1102px;top:383px;width:32px;text-align:center;font-size:13px;line-height:16px;color:#111">27</div>
<div class="a" style="left:1134px;top:373px;width:32px;height:33px;background:#ebf4f8"></div>
<div class="a nw pp" style="left:1134px;top:383px;width:32px;text-align:center;font-size:13px;line-height:16px;color:#111">28</div>
<div class="a" style="left:1166px;top:373px;width:32px;height:33px;background:#ebf4f8"></div>
<div class="a nw pp" style="left:1166px;top:383px;width:32px;text-align:center;font-size:13px;line-height:16px;color:#111">29</div>
<div class="a" style="left:1198px;top:373px;width:32px;height:33px;background:#ebf4f8"></div>
<div class="a nw pp" style="left:1198px;top:383px;width:32px;text-align:center;font-size:13px;line-height:16px;color:#111">30</div>
<div class="a" style="left:1006px;top:406px;width:32px;height:33px;background:#ebf4f8"></div>
<div class="a nw pp" style="left:1006px;top:416px;width:32px;text-align:center;font-size:13px;line-height:16px;color:#111">31</div>
<div class="a nw pp" style="left:1038px;top:416px;width:32px;text-align:center;font-size:13px;line-height:16px;color:#999">1</div>
<div class="a nw pp" style="left:1070px;top:416px;width:32px;text-align:center;font-size:13px;line-height:16px;color:#999">2</div>
<div class="a nw pp" style="left:1102px;top:416px;width:32px;text-align:center;font-size:13px;line-height:16px;color:#999">3</div>
<div class="a nw pp" style="left:1134px;top:416px;width:32px;text-align:center;font-size:13px;line-height:16px;color:#999">4</div>
<div class="a nw pp" style="left:1166px;top:416px;width:32px;text-align:center;font-size:13px;line-height:16px;color:#999">5</div>
<div class="a nw pp" style="left:1198px;top:416px;width:32px;text-align:center;font-size:13px;line-height:16px;color:#999">6</div>
<div class="a nw pp" style="left:1247px;top:194px;width:224px;text-align:center;font-size:12.5px;line-height:16px;color:#333">Jun 2020</div>
<div class="a nw pp" style="left:1247px;top:221px;width:32px;text-align:center;font-size:12.5px;line-height:16px;color:#444">Su</div>
<div class="a nw pp" style="left:1279px;top:221px;width:32px;text-align:center;font-size:12.5px;line-height:16px;color:#444">Mo</div>
<div class="a nw pp" style="left:1311px;top:221px;width:32px;text-align:center;font-size:12.5px;line-height:16px;color:#444">Tu</div>
<div class="a nw pp" style="left:1343px;top:221px;width:32px;text-align:center;font-size:12.5px;line-height:16px;color:#444">We</div>
<div class="a nw pp" style="left:1375px;top:221px;width:32px;text-align:center;font-size:12.5px;line-height:16px;color:#444">Th</div>
<div class="a nw pp" style="left:1407px;top:221px;width:32px;text-align:center;font-size:12.5px;line-height:16px;color:#444">Fr</div>
<div class="a nw pp" style="left:1439px;top:221px;width:32px;text-align:center;font-size:12.5px;line-height:16px;color:#444">Sa</div>
<div class="a nw pp" style="left:1247px;top:251px;width:32px;text-align:center;font-size:13px;line-height:16px;color:#999">31</div>
<div class="a" style="left:1279px;top:241px;width:32px;height:33px;background:#ebf4f8"></div>
<div class="a nw pp" style="left:1279px;top:251px;width:32px;text-align:center;font-size:13px;line-height:16px;color:#111">1</div>
<div class="a" style="left:1311px;top:241px;width:32px;height:33px;background:#ebf4f8"></div>
<div class="a nw pp" style="left:1311px;top:251px;width:32px;text-align:center;font-size:13px;line-height:16px;color:#111">2</div>
<div class="a" style="left:1343px;top:241px;width:32px;height:33px;background:#ebf4f8"></div>
<div class="a nw pp" style="left:1343px;top:251px;width:32px;text-align:center;font-size:13px;line-height:16px;color:#111">3</div>
<div class="a" style="left:1375px;top:241px;width:32px;height:33px;background:#ebf4f8"></div>
<div class="a nw pp" style="left:1375px;top:251px;width:32px;text-align:center;font-size:13px;line-height:16px;color:#111">4</div>
<div class="a" style="left:1407px;top:241px;width:32px;height:33px;background:#ebf4f8"></div>
<div class="a nw pp" style="left:1407px;top:251px;width:32px;text-align:center;font-size:13px;line-height:16px;color:#111">5</div>
<div class="a" style="left:1439px;top:241px;width:32px;height:33px;background:#ebf4f8"></div>
<div class="a nw pp" style="left:1439px;top:251px;width:32px;text-align:center;font-size:13px;line-height:16px;color:#111">6</div>
<div class="a" style="left:1247px;top:274px;width:32px;height:33px;background:#ebf4f8"></div>
<div class="a nw pp" style="left:1247px;top:284px;width:32px;text-align:center;font-size:13px;line-height:16px;color:#111">7</div>
<div class="a" style="left:1279px;top:274px;width:32px;height:33px;background:#323d4b;border-radius:0 4px 4px 0"></div>
<div class="a nw pp" style="left:1279px;top:284px;width:32px;text-align:center;font-size:13px;line-height:16px;color:#fff">8</div>
<div class="a" style="left:1312px;top:275px;width:31px;height:32px;background:#eee;border-radius:3px"></div>
<div class="a nw pp" style="left:1311px;top:284px;width:32px;text-align:center;font-size:13px;line-height:16px;color:#999;text-decoration:line-through">9</div>
<div class="a" style="left:1344px;top:275px;width:31px;height:32px;background:#eee;border-radius:3px"></div>
<div class="a nw pp" style="left:1343px;top:284px;width:32px;text-align:center;font-size:13px;line-height:16px;color:#999;text-decoration:line-through">10</div>
<div class="a" style="left:1376px;top:275px;width:31px;height:32px;background:#eee;border-radius:3px"></div>
<div class="a nw pp" style="left:1375px;top:284px;width:32px;text-align:center;font-size:13px;line-height:16px;color:#999;text-decoration:line-through">11</div>
<div class="a" style="left:1408px;top:275px;width:31px;height:32px;background:#eee;border-radius:3px"></div>
<div class="a nw pp" style="left:1407px;top:284px;width:32px;text-align:center;font-size:13px;line-height:16px;color:#999;text-decoration:line-through">12</div>
<div class="a" style="left:1440px;top:275px;width:31px;height:32px;background:#eee;border-radius:3px"></div>
<div class="a nw pp" style="left:1439px;top:284px;width:32px;text-align:center;font-size:13px;line-height:16px;color:#999;text-decoration:line-through">13</div>
<div class="a" style="left:1248px;top:308px;width:31px;height:32px;background:#eee;border-radius:3px"></div>
<div class="a nw pp" style="left:1247px;top:317px;width:32px;text-align:center;font-size:13px;line-height:16px;color:#999;text-decoration:line-through">14</div>
<div class="a" style="left:1280px;top:308px;width:31px;height:32px;background:#eee;border-radius:3px"></div>
<div class="a nw pp" style="left:1279px;top:317px;width:32px;text-align:center;font-size:13px;line-height:16px;color:#999;text-decoration:line-through">15</div>
<div class="a" style="left:1312px;top:308px;width:31px;height:32px;background:#eee;border-radius:3px"></div>
<div class="a nw pp" style="left:1311px;top:317px;width:32px;text-align:center;font-size:13px;line-height:16px;color:#999;text-decoration:line-through">16</div>
<div class="a" style="left:1344px;top:308px;width:31px;height:32px;background:#eee;border-radius:3px"></div>
<div class="a nw pp" style="left:1343px;top:317px;width:32px;text-align:center;font-size:13px;line-height:16px;color:#999;text-decoration:line-through">17</div>
<div class="a" style="left:1376px;top:308px;width:31px;height:32px;background:#eee;border-radius:3px"></div>
<div class="a nw pp" style="left:1375px;top:317px;width:32px;text-align:center;font-size:13px;line-height:16px;color:#999;text-decoration:line-through">18</div>
<div class="a" style="left:1408px;top:308px;width:31px;height:32px;background:#eee;border-radius:3px"></div>
<div class="a nw pp" style="left:1407px;top:317px;width:32px;text-align:center;font-size:13px;line-height:16px;color:#999;text-decoration:line-through">19</div>
<div class="a" style="left:1440px;top:308px;width:31px;height:32px;background:#eee;border-radius:3px"></div>
<div class="a nw pp" style="left:1439px;top:317px;width:32px;text-align:center;font-size:13px;line-height:16px;color:#999;text-decoration:line-through">20</div>
<div class="a" style="left:1248px;top:341px;width:31px;height:32px;background:#eee;border-radius:3px"></div>
<div class="a nw pp" style="left:1247px;top:350px;width:32px;text-align:center;font-size:13px;line-height:16px;color:#999;text-decoration:line-through">21</div>
<div class="a" style="left:1280px;top:341px;width:31px;height:32px;background:#eee;border-radius:3px"></div>
<div class="a nw pp" style="left:1279px;top:350px;width:32px;text-align:center;font-size:13px;line-height:16px;color:#999;text-decoration:line-through">22</div>
<div class="a" style="left:1312px;top:341px;width:31px;height:32px;background:#eee;border-radius:3px"></div>
<div class="a nw pp" style="left:1311px;top:350px;width:32px;text-align:center;font-size:13px;line-height:16px;color:#999;text-decoration:line-through">23</div>
<div class="a" style="left:1344px;top:341px;width:31px;height:32px;background:#eee;border-radius:3px"></div>
<div class="a nw pp" style="left:1343px;top:350px;width:32px;text-align:center;font-size:13px;line-height:16px;color:#999;text-decoration:line-through">24</div>
<div class="a" style="left:1376px;top:341px;width:31px;height:32px;background:#eee;border-radius:3px"></div>
<div class="a nw pp" style="left:1375px;top:350px;width:32px;text-align:center;font-size:13px;line-height:16px;color:#999;text-decoration:line-through">25</div>
<div class="a" style="left:1408px;top:341px;width:31px;height:32px;background:#eee;border-radius:3px"></div>
<div class="a nw pp" style="left:1407px;top:350px;width:32px;text-align:center;font-size:13px;line-height:16px;color:#999;text-decoration:line-through">26</div>
<div class="a" style="left:1440px;top:341px;width:31px;height:32px;background:#eee;border-radius:3px"></div>
<div class="a nw pp" style="left:1439px;top:350px;width:32px;text-align:center;font-size:13px;line-height:16px;color:#999;text-decoration:line-through">27</div>
<div class="a" style="left:1248px;top:374px;width:31px;height:32px;background:#eee;border-radius:3px"></div>
<div class="a nw pp" style="left:1247px;top:383px;width:32px;text-align:center;font-size:13px;line-height:16px;color:#999;text-decoration:line-through">28</div>
<div class="a" style="left:1280px;top:374px;width:31px;height:32px;background:#eee;border-radius:3px"></div>
<div class="a nw pp" style="left:1279px;top:383px;width:32px;text-align:center;font-size:13px;line-height:16px;color:#999;text-decoration:line-through">29</div>
<div class="a" style="left:1312px;top:374px;width:31px;height:32px;background:#eee;border-radius:3px"></div>
<div class="a nw pp" style="left:1311px;top:383px;width:32px;text-align:center;font-size:13px;line-height:16px;color:#999;text-decoration:line-through">30</div>
<div class="a" style="left:1344px;top:374px;width:31px;height:32px;background:#eee;border-radius:3px"></div>
<div class="a nw pp" style="left:1343px;top:383px;width:32px;text-align:center;font-size:13px;line-height:16px;color:#999;text-decoration:line-through">1</div>
<div class="a" style="left:1376px;top:374px;width:31px;height:32px;background:#eee;border-radius:3px"></div>
<div class="a nw pp" style="left:1375px;top:383px;width:32px;text-align:center;font-size:13px;line-height:16px;color:#999;text-decoration:line-through">2</div>
<div class="a" style="left:1408px;top:374px;width:31px;height:32px;background:#eee;border-radius:3px"></div>
<div class="a nw pp" style="left:1407px;top:383px;width:32px;text-align:center;font-size:13px;line-height:16px;color:#999;text-decoration:line-through">3</div>
<div class="a" style="left:1440px;top:374px;width:31px;height:32px;background:#eee;border-radius:3px"></div>
<div class="a nw pp" style="left:1439px;top:383px;width:32px;text-align:center;font-size:13px;line-height:16px;color:#999;text-decoration:line-through">4</div>
<div class="a" style="left:1248px;top:407px;width:31px;height:32px;background:#eee;border-radius:3px"></div>
<div class="a nw pp" style="left:1247px;top:416px;width:32px;text-align:center;font-size:13px;line-height:16px;color:#999;text-decoration:line-through">5</div>
<div class="a" style="left:1280px;top:407px;width:31px;height:32px;background:#eee;border-radius:3px"></div>
<div class="a nw pp" style="left:1279px;top:416px;width:32px;text-align:center;font-size:13px;line-height:16px;color:#999;text-decoration:line-through">6</div>
<div class="a" style="left:1312px;top:407px;width:31px;height:32px;background:#eee;border-radius:3px"></div>
<div class="a nw pp" style="left:1311px;top:416px;width:32px;text-align:center;font-size:13px;line-height:16px;color:#999;text-decoration:line-through">7</div>
<div class="a" style="left:1344px;top:407px;width:31px;height:32px;background:#eee;border-radius:3px"></div>
<div class="a nw pp" style="left:1343px;top:416px;width:32px;text-align:center;font-size:13px;line-height:16px;color:#999;text-decoration:line-through">8</div>
<div class="a" style="left:1376px;top:407px;width:31px;height:32px;background:#eee;border-radius:3px"></div>
<div class="a nw pp" style="left:1375px;top:416px;width:32px;text-align:center;font-size:13px;line-height:16px;color:#999;text-decoration:line-through">9</div>
<div class="a" style="left:1408px;top:407px;width:31px;height:32px;background:#eee;border-radius:3px"></div>
<div class="a nw pp" style="left:1407px;top:416px;width:32px;text-align:center;font-size:13px;line-height:16px;color:#999;text-decoration:line-through">10</div>
<div class="a" style="left:1440px;top:407px;width:31px;height:32px;background:#eee;border-radius:3px"></div>
<div class="a nw pp" style="left:1439px;top:416px;width:32px;text-align:center;font-size:13px;line-height:16px;color:#999;text-decoration:line-through">11</div>
<div class="a nw pp" style="left:1490px;top:130px;font-size:13px;line-height:16px;color:#111;-webkit-text-stroke:0.25px #111;letter-spacing:-0.1px">Last 3 Hours</div>
<div class="a nw pp" style="left:1490px;top:166px;font-size:13px;line-height:16px;color:#111;-webkit-text-stroke:0.25px #111;letter-spacing:-0.1px">Last 6 Hours</div>
<div class="a nw pp" style="left:1490px;top:202px;font-size:13px;line-height:16px;color:#111;-webkit-text-stroke:0.25px #111;letter-spacing:-0.1px">Last 12 Hours</div>
<div class="a nw pp" style="left:1490px;top:238px;font-size:13px;line-height:16px;color:#111;-webkit-text-stroke:0.25px #111;letter-spacing:-0.1px">Last 24 Hours</div>
<div class="a nw pp" style="left:1490px;top:274px;font-size:13px;line-height:16px;color:#111;-webkit-text-stroke:0.25px #111;letter-spacing:-0.1px">Yesterday</div>
<div class="a nw pp" style="left:1490px;top:310px;font-size:13px;line-height:16px;color:#111;-webkit-text-stroke:0.25px #111;letter-spacing:-0.1px">Last 7 days</div>
<div class="a nw pp" style="left:1490px;top:346px;font-size:13px;line-height:16px;color:#111;-webkit-text-stroke:0.25px #111;letter-spacing:-0.1px">Last 30 days</div>
<div class="a" style="left:1485px;top:375px;width:160px;height:28px;background:#323d4b;border-radius:4px"></div>
<div class="a nw pp" style="left:1490px;top:382px;font-size:13px;line-height:16px;color:#fff;-webkit-text-stroke:0.2px #fff;letter-spacing:-0.1px">Custom range</div>
<div class="a" style="left:1485px;top:411px;width:49px;height:26px;background:#33ab5f"></div>
<div class="a nw pp" style="left:1494px;top:417px;font-size:12.5px;line-height:16px;color:#fff;-webkit-text-stroke:0.3px #fff">Apply</div>
<div class="a" style="left:1536px;top:411px;width:54px;height:26px;background:#f1f4f6;border:1px solid #d6dde2"></div>
<div class="a nw pp" style="left:1545px;top:417px;font-size:12.5px;line-height:16px;color:#222;letter-spacing:-0.5px">Cancel</div>

</body></html>
